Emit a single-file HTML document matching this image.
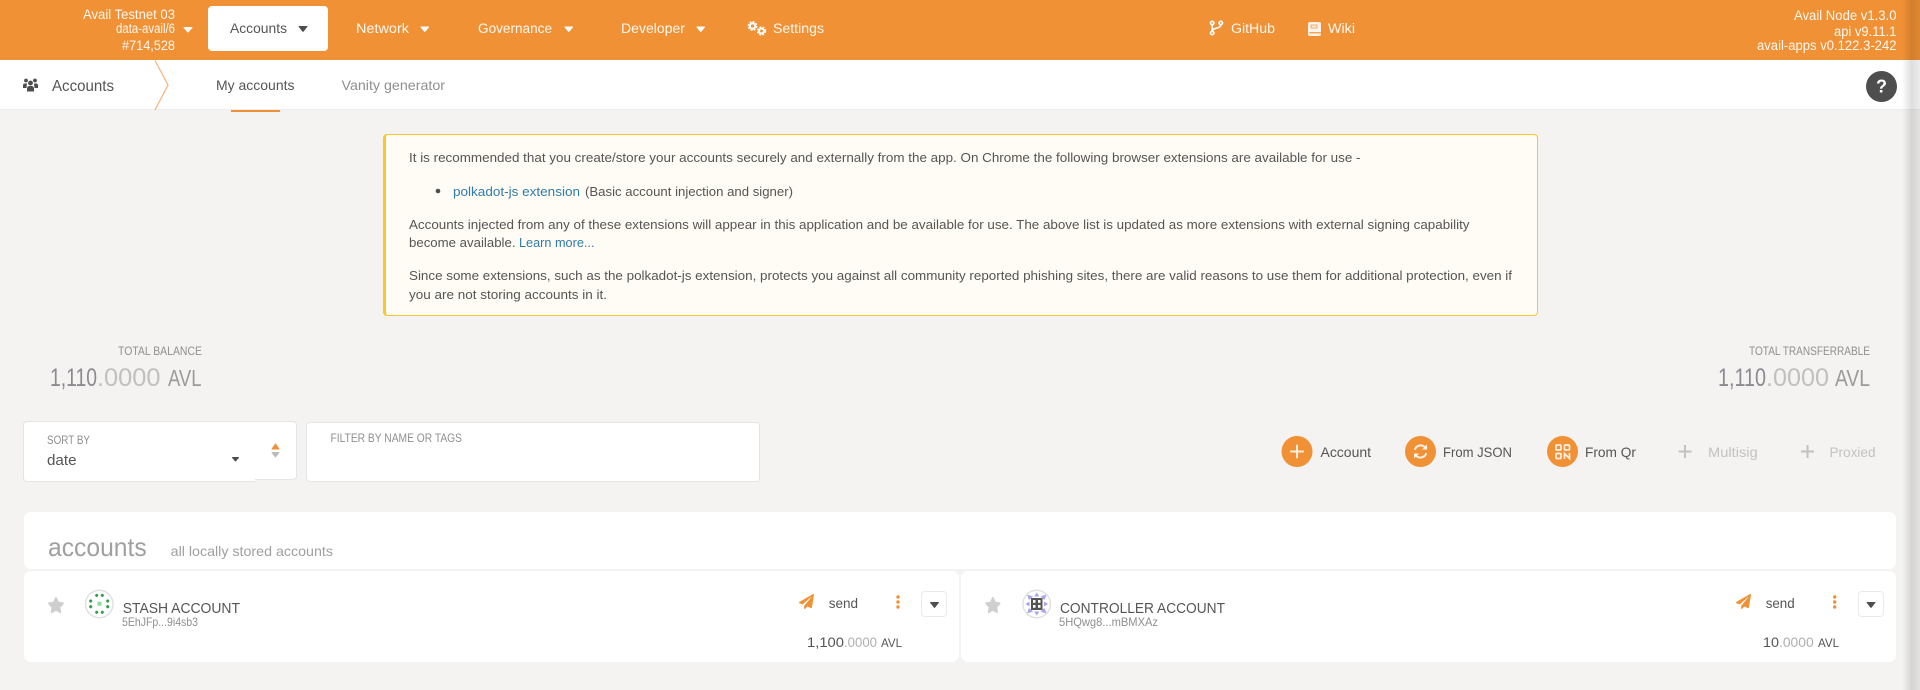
<!DOCTYPE html>
<html lang="en"><head><meta charset="utf-8"><title>Accounts</title>
<style>
html,body{margin:0;padding:0;width:1920px;height:690px;overflow:hidden;background:#f4f3f2}
body{position:relative;font-family:"Liberation Sans",sans-serif}
.b{position:absolute;box-sizing:border-box}
svg{position:absolute;left:0;top:0}
text{font-family:"Liberation Sans",sans-serif;fill:#555;font-size:13px}
.w2{fill:#fff;font-size:13.5px;fill-opacity:.93}
.n{font-size:14px}
.g{fill:#8f8f8f}
.l{fill:#2f7ca8}
.s12{font-size:12px}
.s16{font-size:16px}
.big{font-size:25px}
.dis{fill:#c2c2c2;font-size:14px}
</style></head><body>
<div class="b" style="left:0;top:0;width:1920px;height:60px;background:#f19135"></div>
<div class="b" style="left:208px;top:6px;width:120px;height:45px;background:#fff;border-radius:4px"></div>
<div class="b" style="left:0;top:60px;width:1920px;height:50px;background:#fff;border-bottom:1px solid #eee"></div>
<div class="b" style="left:231px;top:110px;width:49px;height:2px;background:#f19135"></div>
<div class="b" style="left:383px;top:134px;width:1155px;height:182px;background:#fffcf5;border:1px solid #fbc52d;border-left-width:3px;border-radius:4px"></div>
<div class="b" style="left:23px;top:421px;width:274px;height:59px;background:#fff;border:1px solid #e4e4e4;border-radius:4px"></div>
<div class="b" style="left:23px;top:421px;width:232px;height:61px;background:#fff;border:1px solid #e4e4e4;border-right:0;border-radius:4px 0 0 4px"></div>
<div class="b" style="left:306px;top:422px;width:454px;height:60px;background:#fff;border:1px solid #e4e4e4;border-radius:4px"></div>
<div class="b" style="left:24px;top:512px;width:1872px;height:57px;background:#fff;border-radius:7px"></div>
<div class="b" style="left:24px;top:571px;width:935px;height:91px;background:#fff;border-radius:7px"></div>
<div class="b" style="left:961px;top:571px;width:935px;height:91px;background:#fff;border-radius:7px"></div>
<div class="b" style="left:921px;top:591px;width:26px;height:26px;background:#fff;border:1px solid #eaeaea;border-radius:4px"></div>
<div class="b" style="left:1858px;top:591px;width:26px;height:26px;background:#fff;border:1px solid #eaeaea;border-radius:4px"></div>

<svg width="1920" height="690" viewBox="0 0 1920 690" xmlns="http://www.w3.org/2000/svg">
<defs>
<path id="plane" d="M476 3.2L12.5 270.6c-18.1 10.4-15.8 35.6 2.2 43.2L121 358.4l287.3-253.2c5.5-4.9 13.3 2.6 8.6 8.3L176 407v80.5c0 23.6 28.5 32.9 42.5 15.8L282 426l124.6 52.2c14.2 6 30.4-2.9 33-18.2l72-432C515 7.8 493.3-6.8 476 3.2z"/>
<path id="star" d="M259.3 17.8L194 150.2 47.9 171.5c-26.2 3.8-36.7 36.1-17.7 54.6l105.7 103-25 145.5c-4.5 26.3 23.2 46 46.4 33.7L288 439.6l130.7 68.7c23.2 12.2 50.9-7.4 46.4-33.7l-25-145.5 105.7-103c19-18.5 8.5-50.8-17.7-54.6L382 150.2 316.7 17.8c-11.7-23.6-45.6-24.1-57.4 0z"/>
</defs>

<!-- top bar left -->
<text class="w2" x="83" y="19" textLength="92" lengthAdjust="spacingAndGlyphs">Avail Testnet 03</text>
<text class="w2" x="116" y="33" textLength="59" lengthAdjust="spacingAndGlyphs">data-avail/6</text>
<text class="w2" x="122" y="50" textLength="53" lengthAdjust="spacingAndGlyphs">#714,528</text>
<path d="M184 27.5h8l-4 4.5z" fill="#fff" stroke="#fff" stroke-linejoin="round" fill-opacity=".9"/>

<text class="n" x="230" y="33" textLength="57" lengthAdjust="spacingAndGlyphs">Accounts</text>
<path d="M299 26.5h8l-4 5z" fill="#4e4e4e" stroke="#4e4e4e" stroke-linejoin="round"/>
<text class="w2" x="356" y="33" textLength="53" lengthAdjust="spacingAndGlyphs">Network</text>
<path d="M421 27h7.5l-3.75 4.5z" fill="#fff" stroke="#fff" stroke-linejoin="round"/>
<text class="w2" x="478" y="33" textLength="74" lengthAdjust="spacingAndGlyphs">Governance</text>
<path d="M565 27h7.5l-3.75 4.5z" fill="#fff" stroke="#fff" stroke-linejoin="round"/>
<text class="w2" x="621" y="33" textLength="64" lengthAdjust="spacingAndGlyphs">Developer</text>
<path d="M697 27h7.5l-3.75 4.5z" fill="#fff" stroke="#fff" stroke-linejoin="round"/>
<!-- settings cogs -->
<g fill="none" stroke="#fff">
<circle cx="752.5" cy="26" r="2.6" stroke-width="2"/>
<circle cx="752.5" cy="26" r="4.2" stroke-width="1.5" stroke-dasharray="2 1.3"/>
<circle cx="761.5" cy="31" r="2.4" stroke-width="1.8"/>
<circle cx="761.5" cy="31" r="3.9" stroke-width="1.5" stroke-dasharray="2 1.2"/>
</g>
<text class="w2" x="773" y="33" textLength="51" lengthAdjust="spacingAndGlyphs">Settings</text>

<!-- github/wiki -->
<g fill="none" stroke="#fff" stroke-width="1.6">
<circle cx="1212.2" cy="23" r="1.7"/><circle cx="1212.2" cy="33" r="1.7"/><circle cx="1220.8" cy="23" r="1.7"/>
<path d="M1212.2 25v6M1220.8 25c0 4-8.6 2.5-8.6 6"/>
</g>
<text class="w2" x="1231" y="33" textLength="44" lengthAdjust="spacingAndGlyphs">GitHub</text>
<rect x="1308" y="22" width="13" height="14" rx="2" fill="#fff" fill-opacity=".9"/>
<path d="M1311 25h6v3h-6z" fill="none" stroke="#f19135" stroke-width=".8"/>
<path d="M1309.500 32.800h11.500" stroke="#f19135" stroke-width="1.200"/>
<text class="w2" x="1328" y="33" textLength="27" lengthAdjust="spacingAndGlyphs">Wiki</text>

<!-- top right -->
<text class="w2" x="1794" y="20" textLength="102.5" lengthAdjust="spacingAndGlyphs">Avail Node v1.3.0</text>
<text class="w2" x="1834" y="36" textLength="62.5" lengthAdjust="spacingAndGlyphs">api v9.11.1</text>
<text class="w2" x="1757" y="50" textLength="139.5" lengthAdjust="spacingAndGlyphs">avail-apps v0.122.3-242</text>

<!-- sub header -->
<g fill="#4e4e4e">
<circle cx="26" cy="80.500" r="1.900"/><circle cx="35" cy="80.500" r="1.900"/><circle cx="30.500" cy="83" r="2.400"/>
<path d="M23 88v-2.500a2 2 0 0 1 2-2h2l-.5 4.500zM38 88v-2.500a2 2 0 0 0-2-2h-2l.5 4.500z"/>
<path d="M27 91.500v-3a2.500 2.500 0 0 1 2.500-2.500h2a2.500 2.500 0 0 1 2.500 2.500v3z"/>
</g>
<text class="s16" x="52" y="91" textLength="62" lengthAdjust="spacingAndGlyphs">Accounts</text>
<path d="M155 60.500L168 85 155 110" fill="none" stroke="#f6b27a" stroke-width="1.200"/>
<text class="n" x="216" y="90" textLength="78.500" lengthAdjust="spacingAndGlyphs">My accounts</text>
<text class="n g" x="341.500" y="90" textLength="103.500" lengthAdjust="spacingAndGlyphs">Vanity generator</text>
<circle cx="1881.500" cy="86.500" r="15.500" fill="#4e4e4e"/>
<text x="1881.500" y="92.500" text-anchor="middle" style="fill:#fff;font-size:18px;font-weight:bold">?</text>

<!-- notice -->
<text x="409" y="162" textLength="951.500" lengthAdjust="spacingAndGlyphs">It is recommended that you create/store your accounts securely and externally from the app. On Chrome the following browser extensions are available for use -</text>
<circle cx="438" cy="191" r="2.300" fill="#4e4e4e"/>
<text class="l" x="453" y="196" textLength="127" lengthAdjust="spacingAndGlyphs">polkadot-js extension</text>
<text x="585" y="196" textLength="208" lengthAdjust="spacingAndGlyphs">(Basic account injection and signer)</text>
<text x="409" y="229" textLength="1060.500" lengthAdjust="spacingAndGlyphs">Accounts injected from any of these extensions will appear in this application and be available for use. The above list is updated as more extensions with external signing capability</text>
<text x="409" y="247" textLength="106.500" lengthAdjust="spacingAndGlyphs">become available.</text>
<text class="l" x="519" y="247" textLength="75.500" lengthAdjust="spacingAndGlyphs">Learn more...</text>
<text x="409" y="280" textLength="1103" lengthAdjust="spacingAndGlyphs">Since some extensions, such as the polkadot-js extension, protects you against all community reported phishing sites, there are valid reasons to use them for additional protection, even if</text>
<text x="409" y="299" textLength="198" lengthAdjust="spacingAndGlyphs">you are not storing accounts in it.</text>

<!-- balances -->
<text class="s12 g" x="118" y="355" textLength="84" lengthAdjust="spacingAndGlyphs">TOTAL BALANCE</text>
<text class="big" x="50" y="386" textLength="47" lengthAdjust="spacingAndGlyphs" style="fill:#8a8a90">1,110</text>
<text class="big" x="97" y="386" textLength="63.500" lengthAdjust="spacingAndGlyphs" style="fill:#c0c0c0">.0000</text>
<text class="big" x="168" y="386" textLength="33.500" lengthAdjust="spacingAndGlyphs" style="fill:#9a9a9a;font-size:23px">AVL</text>
<text class="s12 g" x="1749" y="355" textLength="121" lengthAdjust="spacingAndGlyphs">TOTAL TRANSFERRABLE</text>
<text class="big" x="1718" y="386" textLength="48" lengthAdjust="spacingAndGlyphs" style="fill:#8a8a90">1,110</text>
<text class="big" x="1766" y="386" textLength="63" lengthAdjust="spacingAndGlyphs" style="fill:#c0c0c0">.0000</text>
<text class="big" x="1835" y="386" textLength="35" lengthAdjust="spacingAndGlyphs" style="fill:#9a9a9a;font-size:23px">AVL</text>

<!-- filters -->
<text class="s12 g" x="47" y="444" textLength="43" lengthAdjust="spacingAndGlyphs">SORT BY</text>
<text class="n" x="47" y="465" textLength="29.500" lengthAdjust="spacingAndGlyphs" style="font-size:15px">date</text>
<path d="M232.500 457.500h6l-3 3.500z" fill="#4e4e4e" stroke="#4e4e4e" stroke-linejoin="round"/>
<path d="M272 449l3.500-5 3.500 5z" fill="#f19135" stroke="#f19135" stroke-linejoin="round"/>
<path d="M272 452.500h7l-3.500 4.500z" fill="#bbb" stroke="#bbb" stroke-linejoin="round"/>
<text class="s12 g" x="330.500" y="442" textLength="131.500" lengthAdjust="spacingAndGlyphs">FILTER BY NAME OR TAGS</text>

<!-- action buttons -->
<circle cx="1297" cy="451.500" r="15.500" fill="#f19135"/>
<path d="M1297 445.500v12M1291 451.500h12" stroke="#fff" stroke-opacity=".85" stroke-width="2" stroke-linecap="round"/>
<text class="n" x="1320.500" y="457" textLength="50.500" lengthAdjust="spacingAndGlyphs">Account</text>
<circle cx="1420.500" cy="451.500" r="15.500" fill="#f19135"/>
<g fill="none" stroke="#fff" stroke-opacity=".85" stroke-width="2">
<path d="M1414.800 449.800a6 6 0 0 1 10.200-2.400l1.300 1.400"/><path d="M1426.200 453.200a6 6 0 0 1-10.200 2.400l-1.300-1.400"/>
</g>
<path d="M1427 444.500v5h-5zM1414 458.500v-5h5z" fill="#fff" fill-opacity=".85"/>
<text class="n" x="1443" y="457" textLength="69" lengthAdjust="spacingAndGlyphs">From JSON</text>
<circle cx="1562.500" cy="451.500" r="15.500" fill="#f19135"/>
<g fill="none" stroke="#fff" stroke-opacity=".85" stroke-width="1.700">
<rect x="1556" y="445" width="5" height="5" rx="1"/><rect x="1564.500" y="445" width="5" height="5" rx="1"/><rect x="1556" y="453.500" width="5" height="5" rx="1"/>
<path d="M1564.500 459v-5.500l5 5v-5.500"/>
</g>
<text class="n" x="1585" y="457" textLength="51" lengthAdjust="spacingAndGlyphs">From Qr</text>
<path d="M1685 445v13M1678.600 451.500h13M1807.500 445v13M1801 451.500h13" stroke="#c2c2c2" stroke-width="2"/>
<text class="dis" x="1708" y="457" textLength="49.700" lengthAdjust="spacingAndGlyphs">Multisig</text>
<text class="dis" x="1829.500" y="457" textLength="46" lengthAdjust="spacingAndGlyphs">Proxied</text>

<!-- accounts panel -->
<text x="48" y="556" textLength="98.700" lengthAdjust="spacingAndGlyphs" style="fill:#a0a0a0;font-size:26px">accounts</text>
<text x="170.700" y="556" textLength="162.300" lengthAdjust="spacingAndGlyphs" style="fill:#a0a0a0;font-size:14px">all locally stored accounts</text>

<!-- left card -->
<use href="#star" transform="translate(47.500 597) scale(.0295 .0315)" fill="#cfcfcf"/>
<circle cx="99.300" cy="604" r="13.700" fill="#fff" stroke="#dedede" stroke-width="1.300"/>
<g fill="none" stroke="#2e9e46" stroke-width="2.300" stroke-linecap="round">
<path d="M96.700 594.900v1M96.200 595.400h1M102.300 594.900v1M101.800 595.400h1M96.700 611.800v1M96.200 612.300h1M102.300 611.800v1M101.800 612.300h1M90.700 600.500v1M90.200 601h1M90.700 606.200v1M90.200 606.700h1M107.700 600.500v1M107.200 601h1M107.700 606.200v1M107.200 606.700h1"/>
</g>
<rect x="97.500" y="601.700" width="4" height="4" fill="#8ddc9b"/>
<text class="s16" x="122.700" y="613" textLength="117.300" lengthAdjust="spacingAndGlyphs" style="font-size:15px">STASH ACCOUNT</text>
<text class="s12 g" x="122" y="626" textLength="76" lengthAdjust="spacingAndGlyphs">5EhJFp...9i4sb3</text>
<use href="#plane" transform="translate(799 594) scale(.0293)" fill="#f19135"/>
<text class="n" x="828.700" y="608" textLength="29.300" lengthAdjust="spacingAndGlyphs">send</text>
<g fill="#f19135"><circle cx="898" cy="597" r="1.700"/><circle cx="898" cy="602" r="1.700"/><circle cx="898" cy="607" r="1.700"/></g>
<path d="M930.500 602.500h8l-4 5z" fill="#4e4e4e" stroke="#4e4e4e" stroke-linejoin="round"/>
<text class="n" x="807" y="647" textLength="37" lengthAdjust="spacingAndGlyphs">1,100</text>
<text class="n" x="844" y="647" textLength="33" lengthAdjust="spacingAndGlyphs" style="fill:#b0b0b0">.0000</text>
<text class="s12" x="881" y="647" textLength="21" lengthAdjust="spacingAndGlyphs">AVL</text>

<!-- right card -->
<use href="#star" transform="translate(984.700 597) scale(.0285 .0315)" fill="#cfcfcf"/>
<circle cx="1036.700" cy="604" r="13.700" fill="#fff" stroke="#dedede" stroke-width="1.300"/>
<g fill="#a9a2ee">
<path d="M1027 594.500l6 2-4 3.500zM1046.500 594.500l-6 2 4 3.500zM1027 613.500l6-2-4-3.500zM1046.500 613.500l-6-2 4-3.500zM1036.700 592.500l2.500 4h-5zM1036.700 615.500l2.500-4h-5zM1025.500 604l4-2.500v5zM1048 604l-4-2.500v5z"/>
</g>
<rect x="1031" y="598" width="11.500" height="12" fill="#555"/>
<g fill="#fff"><rect x="1033" y="600" width="2.500" height="2.800"/><rect x="1038" y="600" width="2.500" height="2.800"/><rect x="1033" y="605" width="2.500" height="2.800"/><rect x="1038" y="605" width="2.500" height="2.800"/></g>
<text class="s16" x="1060" y="613" textLength="165" lengthAdjust="spacingAndGlyphs" style="font-size:15px">CONTROLLER ACCOUNT</text>
<text class="s12 g" x="1059" y="626" textLength="99" lengthAdjust="spacingAndGlyphs">5HQwg8...mBMXAz</text>
<use href="#plane" transform="translate(1736 594) scale(.0293)" fill="#f19135"/>
<text class="n" x="1765.700" y="608" textLength="29" lengthAdjust="spacingAndGlyphs">send</text>
<g fill="#f19135"><circle cx="1834.700" cy="597" r="1.700"/><circle cx="1834.700" cy="602" r="1.700"/><circle cx="1834.700" cy="607" r="1.700"/></g>
<path d="M1867 602.500h8l-4 5z" fill="#4e4e4e" stroke="#4e4e4e" stroke-linejoin="round"/>
<text class="n" x="1763" y="647" textLength="16" lengthAdjust="spacingAndGlyphs">10</text>
<text class="n" x="1779" y="647" textLength="34.700" lengthAdjust="spacingAndGlyphs" style="fill:#b0b0b0">.0000</text>
<text class="s12" x="1818" y="647" textLength="21" lengthAdjust="spacingAndGlyphs">AVL</text>
</svg>
<div class="b" style="left:1902px;top:0;width:18px;height:690px;background:linear-gradient(90deg,rgba(0,0,0,0),rgba(0,0,0,.13) 55%,rgba(0,0,0,.07))"></div>
</body></html>
